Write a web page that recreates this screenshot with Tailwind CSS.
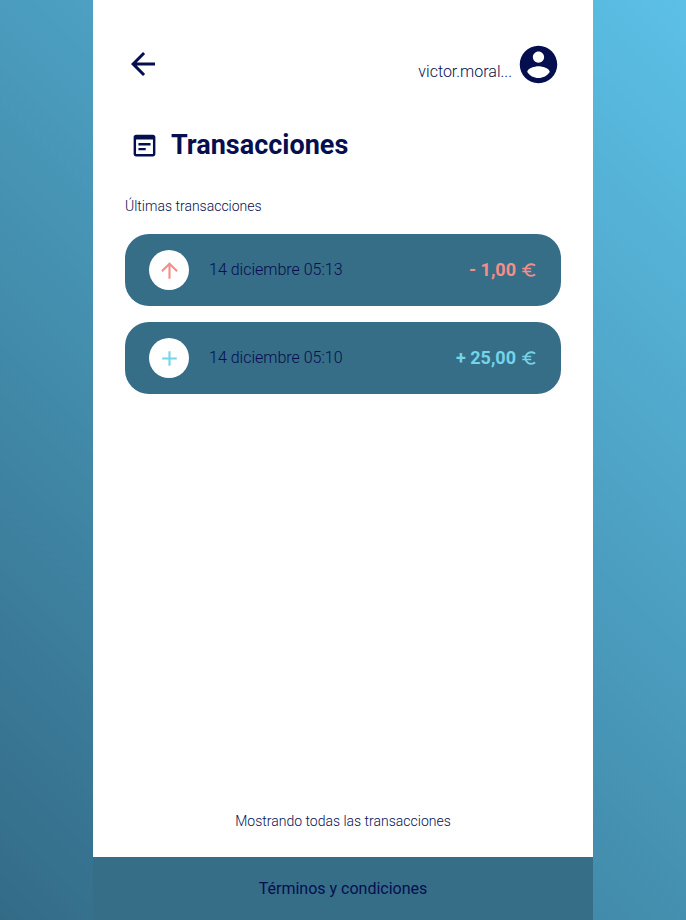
<!DOCTYPE html>
<html lang="es">
<head>
<meta charset="utf-8">
<meta name="viewport" content="width=device-width, initial-scale=1">
<title>Transacciones</title>
<script src="https://cdn.jsdelivr.net/npm/@tailwindcss/browser@4"></script>
</head>
<body class="min-h-screen bg-linear-[45deg,#336b87,#5cc0e6] font-['Roboto',sans-serif] font-light text-[#050f4f]">
<div class="mx-auto flex min-h-screen max-w-[500px] flex-col bg-white">
  <header class="flex items-start justify-between px-8 pt-[42px]">
    <button type="button" class="pt-1" aria-label="Volver">
      <svg class="size-9" viewBox="0 0 24 24" fill="currentColor"><path d="M20 11H7.83l5.59-5.59L12 4l-8 8 8 8 1.41-1.41L7.83 13H20v-2z"/></svg>
    </button>
    <a href="#" class="flex items-center gap-1">
      <span class="pt-3.5 text-base">victor.moral...</span>
      <svg class="size-[45px]" viewBox="0 0 24 24" fill="currentColor" aria-hidden="true"><path d="M12 2C6.48 2 2 6.48 2 12s4.48 10 10 10 10-4.48 10-10S17.52 2 12 2zm0 3c1.66 0 3 1.34 3 3s-1.34 3-3 3-3-1.34-3-3 1.34-3 3-3zm0 14.2c-2.5 0-4.71-1.28-6-3.22.03-1.99 4-3.08 6-3.08 1.99 0 5.97 1.09 6 3.08-1.29 1.94-3.5 3.22-6 3.22z"/></svg>
    </a>
  </header>
  <main class="flex grow flex-col px-8">
    <h1 class="mt-10 flex items-center gap-3 pl-[5px] text-[27px] leading-9 font-bold">
      <svg class="size-[29px]" viewBox="0 0 24 24" fill="currentColor" aria-hidden="true"><path d="M19 3H5c-1.11 0-2 .9-2 2v14c0 1.1.89 2 2 2h14c1.1 0 2-.9 2-2V5c0-1.1-.89-2-2-2zm0 16H5V7h14v12zm-2-7H7v-2h10v2zm-4 4H7v-2h6v2z"/></svg>
      Transacciones
    </h1>
    <h2 class="mt-[31px] text-sm leading-6">Últimas transacciones</h2>
    <ul class="mt-4 flex flex-col gap-4">
      <li class="flex items-center rounded-3xl bg-[#366d87] py-4 pr-[23px] pl-6">
        <span class="flex size-10 items-center justify-center rounded-full bg-white text-[#f58e89]">
          <svg class="size-[25px]" viewBox="0 0 24 24" fill="currentColor" aria-hidden="true"><path d="M4 12l1.41 1.41L11 7.83V20h2V7.83l5.58 5.59L20 12l-8-8-8 8z"/></svg>
        </span>
        <span class="ml-5 grow text-base">14 diciembre 05:13</span>
        <span class="flex items-center gap-1 text-lg font-bold text-[#f58e89]">- 1,00
          <svg class="size-[18px]" viewBox="0 0 24 24" fill="currentColor" role="img" aria-label="€"><path d="M15 18.5c-2.51 0-4.68-1.42-5.76-3.5H15v-2H8.58c-.05-.33-.08-.66-.08-1s.03-.67.08-1H15V9H9.24C10.32 6.92 12.5 5.5 15 5.5c1.61 0 3.09.59 4.23 1.57L21 5.3C19.41 3.87 17.3 3 15 3c-3.92 0-7.24 2.51-8.48 6H3v2h3.06c-.04.33-.06.66-.06 1s.02.67.06 1H3v2h3.52c1.24 3.49 4.56 6 8.48 6 2.31 0 4.41-.87 6-2.3l-1.78-1.77c-1.13.98-2.6 1.57-4.22 1.57z"/></svg>
        </span>
      </li>
      <li class="flex items-center rounded-3xl bg-[#366d87] py-4 pr-[23px] pl-6">
        <span class="flex size-10 items-center justify-center rounded-full bg-white text-[#74d4e8]">
          <svg class="size-[25px]" viewBox="0 0 24 24" fill="currentColor" aria-hidden="true"><path d="M19 13h-6v6h-2v-6H5v-2h6V5h2v6h6v2z"/></svg>
        </span>
        <span class="ml-5 grow text-base">14 diciembre 05:10</span>
        <span class="flex items-center gap-1 text-lg font-bold text-[#74d4e8]">+ 25,00
          <svg class="size-[18px]" viewBox="0 0 24 24" fill="currentColor" role="img" aria-label="€"><path d="M15 18.5c-2.51 0-4.68-1.42-5.76-3.5H15v-2H8.58c-.05-.33-.08-.66-.08-1s.03-.67.08-1H15V9H9.24C10.32 6.92 12.5 5.5 15 5.5c1.61 0 3.09.59 4.23 1.57L21 5.3C19.41 3.87 17.3 3 15 3c-3.92 0-7.24 2.51-8.48 6H3v2h3.06c-.04.33-.06.66-.06 1s.02.67.06 1H3v2h3.52c1.24 3.49 4.56 6 8.48 6 2.31 0 4.41-.87 6-2.3l-1.78-1.77c-1.13.98-2.6 1.57-4.22 1.57z"/></svg>
        </span>
      </li>
    </ul>
    <p class="mt-auto pb-6 text-center text-sm leading-6">Mostrando todas las transacciones</p>
  </main>
  <footer class="bg-[#366d87] pt-5 pb-[19px] text-center text-base font-normal">
    <a href="#">Términos y condiciones</a>
  </footer>
</div>
</body>
</html>
